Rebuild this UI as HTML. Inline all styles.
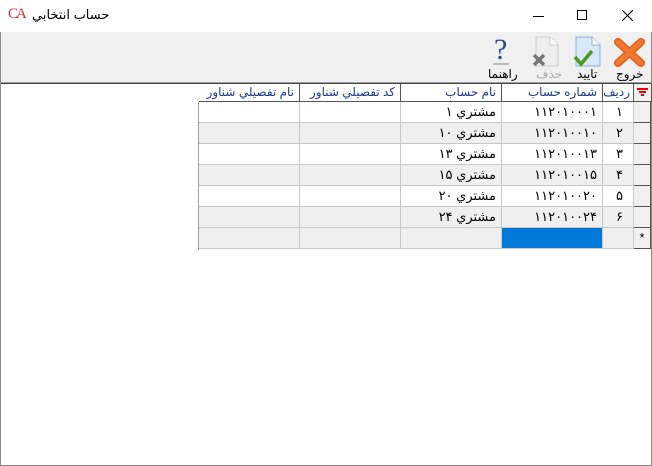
<!DOCTYPE html><html><head><meta charset="utf-8"><style>
*{margin:0;padding:0;box-sizing:border-box}
body{width:652px;height:466px;overflow:hidden;background:#fff;font-family:"Liberation Sans","DejaVu Sans",sans-serif;position:relative}
.win{position:absolute;left:0;top:0;width:652px;height:466px;border:1px solid #8a8a8a}
.title{position:absolute;left:0;top:0;width:652px;height:32px;background:#fff}
.tb{position:absolute;left:1px;top:32px;width:650px;height:51px;background:#f0f0f0;border-bottom:1px solid #a0a0a0}
.lbl{position:absolute;font-size:12px;color:#000;direction:rtl}
.grid{position:absolute;left:198px;top:84px;border-left:1px solid #a0a0a0}
.c{position:absolute;height:21px;border-right:1px solid #c8c8c8;border-bottom:1px solid #c8c8c8;font-size:13px;direction:rtl;text-align:right;padding-right:5px;line-height:20px;color:#000}
.h{height:18px;line-height:17px;font-size:12px;color:#1a3a8a;border-right:1px solid #555;border-bottom:1px solid #555;background:#fff}
</style></head><body>
<div class="win"></div>
<div class="title">
<span style="position:absolute;left:8px;top:6px;color:#d3302f;font:15px 'Liberation Serif',serif;letter-spacing:-2px">CA</span>
<span style="position:absolute;left:32px;top:7px;font-size:13px;direction:rtl">حساب انتخابي</span>
<div style="position:absolute;left:533px;top:16px;width:11px;height:1px;background:#000"></div>
<div style="position:absolute;left:577px;top:10px;width:10px;height:10px;border:1px solid #000"></div>
<svg style="position:absolute;left:622px;top:10px" width="11" height="11"><path d="M0 0L11 11M11 0L0 11" stroke="#000" stroke-width="1.1"/></svg>
</div>
<div class="tb">
<svg style="position:absolute;left:613px;top:5px" width="32" height="30"><path d="M4 5L27 26M27 5L4 26" stroke="#e0601a" stroke-width="8" stroke-linecap="round"/><path d="M4 5L27 26M27 5L4 26" stroke="#f07830" stroke-width="5" stroke-linecap="round"/></svg>
<div class="lbl" style="left:615px;top:35px">خروج</div>
<svg style="position:absolute;left:571px;top:3px" width="32" height="34"><path d="M4 2H20L28 10V31H4Z" fill="#d8e8f8" stroke="#8ab0d8"/><path d="M20 2V10H28" fill="#fff" stroke="#8ab0d8"/><path d="M3 22L9 29L20 16" stroke="#4a9a20" stroke-width="3.5" fill="none"/></svg>
<div class="lbl" style="left:576px;top:35px">تاييد</div>
<svg style="position:absolute;left:529px;top:3px" width="32" height="34"><path d="M6 2H20L28 10V31H6Z" fill="#eee" stroke="#ccc"/><path d="M20 2V10H28" fill="#fff" stroke="#ccc"/><path d="M4 20L14 30M14 20L4 30" stroke="#777" stroke-width="3.5"/></svg>
<div class="lbl" style="left:535px;top:35px;color:#aaa">حذف</div>
<span style="position:absolute;left:493px;top:1px;font:30px 'Liberation Serif',serif;color:#2a4a8a">?</span>
<div style="position:absolute;left:492px;top:31px;width:16px;height:2px;background:#bbb"></div>
<div class="lbl" style="left:487px;top:35px">راهنما</div>
</div>
<div style="position:absolute;left:1px;top:83px;width:650px;height:1px;background:#444"></div>
<div class="grid">
<div class="c h" style="left:0;top:0;width:101px">نام تفصيلي شناور</div>
<div class="c h" style="left:101px;top:0;width:101px">كد تفصيلي شناور</div>
<div class="c h" style="left:202px;top:0;width:101px">نام حساب</div>
<div class="c h" style="left:303px;top:0;width:101px">شماره حساب</div>
<div class="c h" style="left:404px;top:0;width:31px;padding-right:3px">رديف</div>
<div class="c h" style="left:435px;top:0;width:18px;background:#f0f0f0"><svg style="position:absolute;left:3px;top:4px" width="11" height="9"><path d="M0 1H11M2 4H9M4 7H7" stroke="#e00" stroke-width="2"/></svg></div>
</div>
<div id="rows"></div>
<script>
var d=[["۱","۱۱۲۰۱۰۰۰۱","مشتري ۱"],["۲","۱۱۲۰۱۰۰۱۰","مشتري ۱۰"],["۳","۱۱۲۰۱۰۰۱۳","مشتري ۱۳"],["۴","۱۱۲۰۱۰۰۱۵","مشتري ۱۵"],["۵","۱۱۲۰۱۰۰۲۰","مشتري ۲۰"],["۶","۱۱۲۰۱۰۰۲۴","مشتري ۲۴"],["","",""]];
var h='';
for(var i=0;i<7;i++){var t=102+i*21,bg=i%2?'#efefef':'#fff';if(i==6)bg='#efefef';
var x=[199,300,401,502,603];var w=[101,101,101,101,31];var v=["","",d[i][2],d[i][1],d[i][0]];
for(var j=0;j<5;j++){var b=bg;if(i==6&&j==3)b='#0078d7';h+='<div class="c" style="left:'+x[j]+'px;top:'+t+'px;width:'+w[j]+'px;background:'+b+';'+(j==4?'padding-right:10px':'')+'">'+v[j]+'</div>';}
h+='<div class="c" style="left:634px;top:'+t+'px;width:17px;background:#f0f0f0;border-right:1px solid #555;border-bottom-color:#555;padding:0;text-align:center">'+(i==6?'*':'')+'</div>';}
document.getElementById('rows').innerHTML=h;
</script>
<div style="position:absolute;left:198px;top:102px;width:1px;height:148px;background:#a0a0a0"></div>
</body></html>
